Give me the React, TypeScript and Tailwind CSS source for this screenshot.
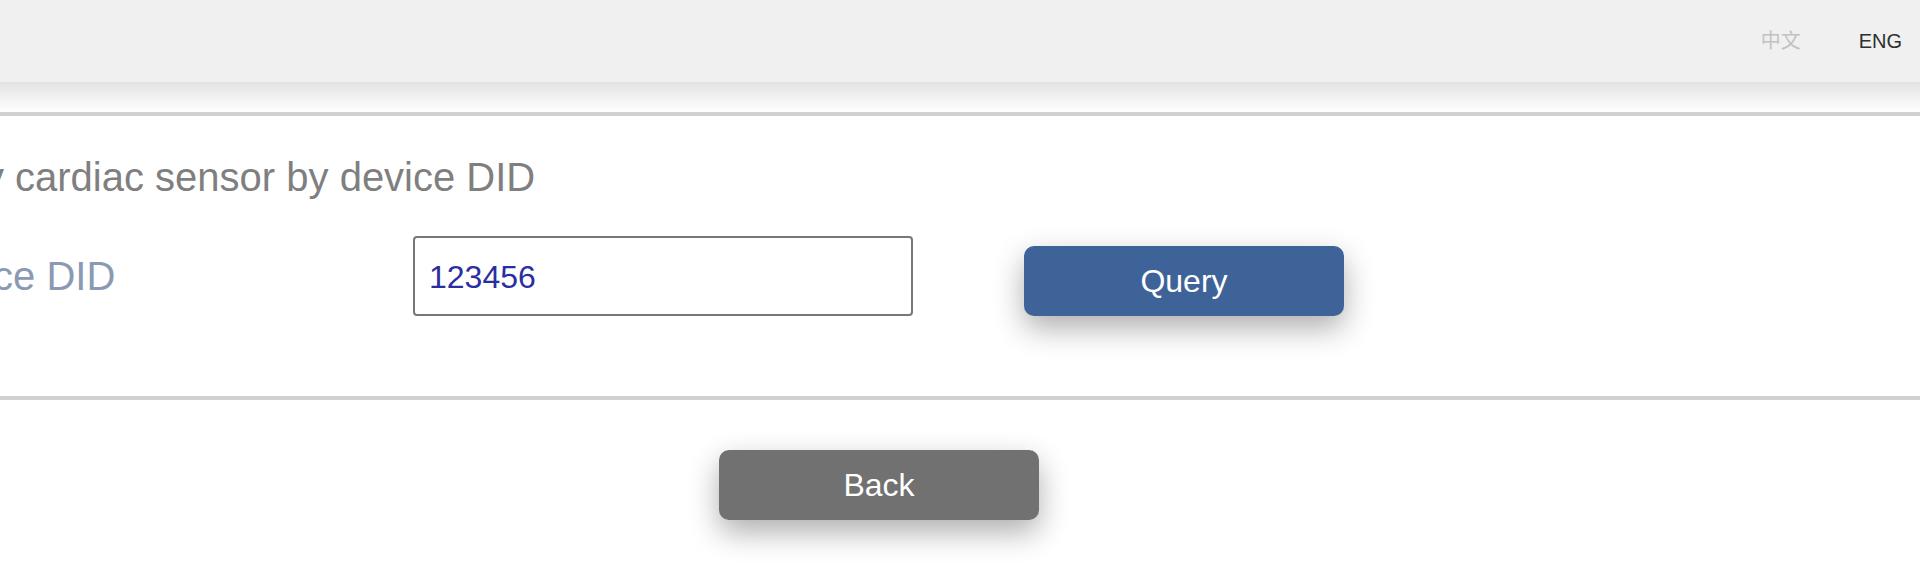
import React from 'react';

const font = { fontFamily: '"Liberation Sans", Arial, Helvetica, sans-serif' };

export default function App() {
  return (
    <div className="w-[1920px] h-[568px] overflow-hidden bg-white" style={font}>
      {/* Top bar with language switch */}
      <header className="h-[82px] bg-[#f0f0f0] flex items-center justify-end pr-[18px] gap-[58px] text-[20px]">
        <span className="text-[#c2c2c2]" style={{ fontFamily: '"Liberation Sans", "Noto Sans CJK SC", sans-serif' }}>中文</span>
        <span className="text-[#2e2e2e]">ENG</span>
      </header>
      <div className="h-[30px] bg-gradient-to-b from-[#e3e3e3] to-white" />

      {/* Query panel */}
      <section className="border-y-4 border-[#d0d0d0] pt-[38px] pb-[80px]">
        <div className="ml-[-105px]">
          <h2 className="text-[40px] leading-[46px] text-[#7f7f7f] font-normal whitespace-nowrap">
            Query cardiac sensor by device DID
          </h2>
          <div className="flex items-end mt-[36px]">
            <label className="w-[518px] pl-[18px] self-center text-[40px] leading-[46px] text-[#8b9ab4] whitespace-nowrap">
              Device DID
            </label>
            <input
              defaultValue="123456"
              className="w-[500px] h-[80px] border-2 border-[#777777] rounded-[4px] pl-[14px] pt-[2px] text-[32px] text-[#2b2ea0] outline-none"
              style={font}
            />
            <button className="ml-[111px] w-[320px] h-[70px] rounded-[10px] bg-[#3e6399] text-white text-[32px] shadow-[0_12px_30px_rgba(0,0,0,0.32)]">
              Query
            </button>
          </div>
        </div>
      </section>

      {/* Back */}
      <div className="flex pl-[719px] pt-[50px]">
        <button className="w-[320px] h-[70px] rounded-[10px] bg-[#717171] text-white text-[32px] shadow-[0_12px_30px_rgba(0,0,0,0.32)]">
          Back
        </button>
      </div>
    </div>
  );
}
